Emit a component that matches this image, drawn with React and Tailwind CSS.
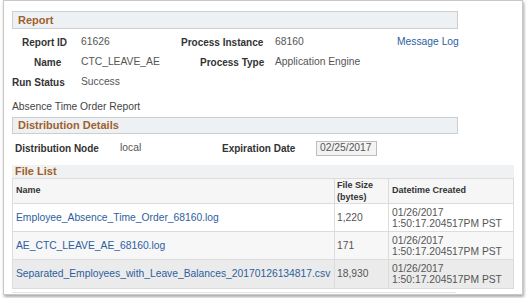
export default function App() {
  const label = "font-bold text-[10px] text-[#333]";
  const value = "text-[10.3px] text-[#555]";
  const title = "font-bold text-[11px] text-[#a0602c]";
  const rows = [
    { name: "Employee_Absence_Time_Order_68160.log", size: "1,220", bg: "bg-white" },
    { name: "AE_CTC_LEAVE_AE_68160.log", size: "171", bg: "bg-[#f7f7f7]" },
    { name: "Separated_Employees_with_Leave_Balances_20170126134817.csv", size: "18,930", bg: "bg-[#ebebeb]" },
  ];
  return (
    <div className="w-[526px] h-[298px] bg-white font-['Liberation_Sans',Arial,sans-serif] overflow-hidden">
      <div className="ml-[3px] w-[520px] h-[295px] border border-[#c8c8c8] bg-white shadow-[1px_2px_3px_rgba(0,0,0,0.35)] pl-[8px] pt-[10px]">
        {/* Report header */}
        <div className="w-[446px] h-[18px] border border-[#cbcfd2] bg-[#eef1f3] flex items-center pl-[5px]">
          <span className={title}>Report</span>
        </div>
        {/* rows */}
        <div className="mt-[3px]">
          <div className="h-[20px] flex items-center">
            <span className={`${label} ml-[10px] w-[59px]`}>Report ID</span>
            <span className={`${value} w-[100px]`}>61626</span>
            <span className={`${label} w-[94px]`}>Process Instance</span>
            <span className={`${value} w-[122px]`}>68160</span>
            <span className="text-[10.3px] text-[#2c5f9e]">Message Log</span>
          </div>
          <div className="h-[20px] flex items-center">
            <span className={`${label} ml-[22px] w-[47px]`}>Name</span>
            <span className={`${value} w-[119px]`}>CTC_LEAVE_AE</span>
            <span className={`${label} w-[75px]`}>Process Type</span>
            <span className={value}>Application Engine</span>
          </div>
          <div className="h-[20px] flex items-center">
            <span className={`${label} w-[69px]`}>Run Status</span>
            <span className={value}>Success</span>
          </div>
        </div>
        <div className="mt-[8px] h-[14px] flex items-center">
          <span className="text-[10.3px] text-[#444]">Absence Time Order Report</span>
        </div>
        {/* Distribution header */}
        <div className="mt-[3px] w-[446px] h-[17px] border border-[#cbcfd2] bg-[#eef1f3] flex items-center pl-[5px]">
          <span className={title}>Distribution Details</span>
        </div>
        <div className="mt-[4px] h-[20px] flex items-center">
          <span className={`${label} ml-[3px] w-[105px]`}>Distribution Node</span>
          <span className={`${value} w-[102px]`}>local</span>
          <span className={`${label} w-[94px]`}>Expiration Date</span>
          <span className="h-[15px] w-[61px] border border-[#bdbdbd] bg-[#f3f3f3] flex items-center pl-[3px] text-[10.3px] text-[#555]">02/25/2017</span>
        </div>
        {/* File list */}
        <div className="mt-[7px] w-[502px] bg-[#eff1f2]">
          <div className="h-[13px] flex items-center pl-[3px]">
            <span className={title}>File List</span>
          </div>
          <div className="border border-[#dcdcdc]">
            <div className="flex h-[25px] bg-[#f6f6f6] border-b border-[#dcdcdc] text-[9px] font-bold text-[#333]">
              <div className="w-[322px] flex items-center pl-[3px] border-r border-[#dcdcdc]">Name</div>
              <div className="w-[54px] flex items-center pl-[2px] leading-[12px] border-r border-[#dcdcdc]">File Size<br />(bytes)</div>
              <div className="flex-1 flex items-center pl-[3px]">Datetime Created</div>
            </div>
            {rows.map((r, i) => (
              <div key={i} className={`flex h-[28px] ${r.bg} ${i < 2 ? "border-b border-[#dcdcdc]" : ""}`}>
                <div className="w-[322px] flex items-center pl-[3px] border-r border-[#dcdcdc] text-[10.3px] text-[#2c5f9e] whitespace-nowrap">{r.name}</div>
                <div className="w-[54px] flex items-center pl-[2px] border-r border-[#dcdcdc] text-[10.3px] text-[#555]">{r.size}</div>
                <div className="flex-1 flex flex-col justify-center pl-[3px] text-[10.3px] leading-[11px] text-[#555]">
                  <span>01/26/2017</span>
                  <span>1:50:17.204517PM PST</span>
                </div>
              </div>
            ))}
          </div>
        </div>
        <div className="mt-[3px] w-[444px] h-px bg-[#e3e3e3]" />
      </div>
    </div>
  );
}
